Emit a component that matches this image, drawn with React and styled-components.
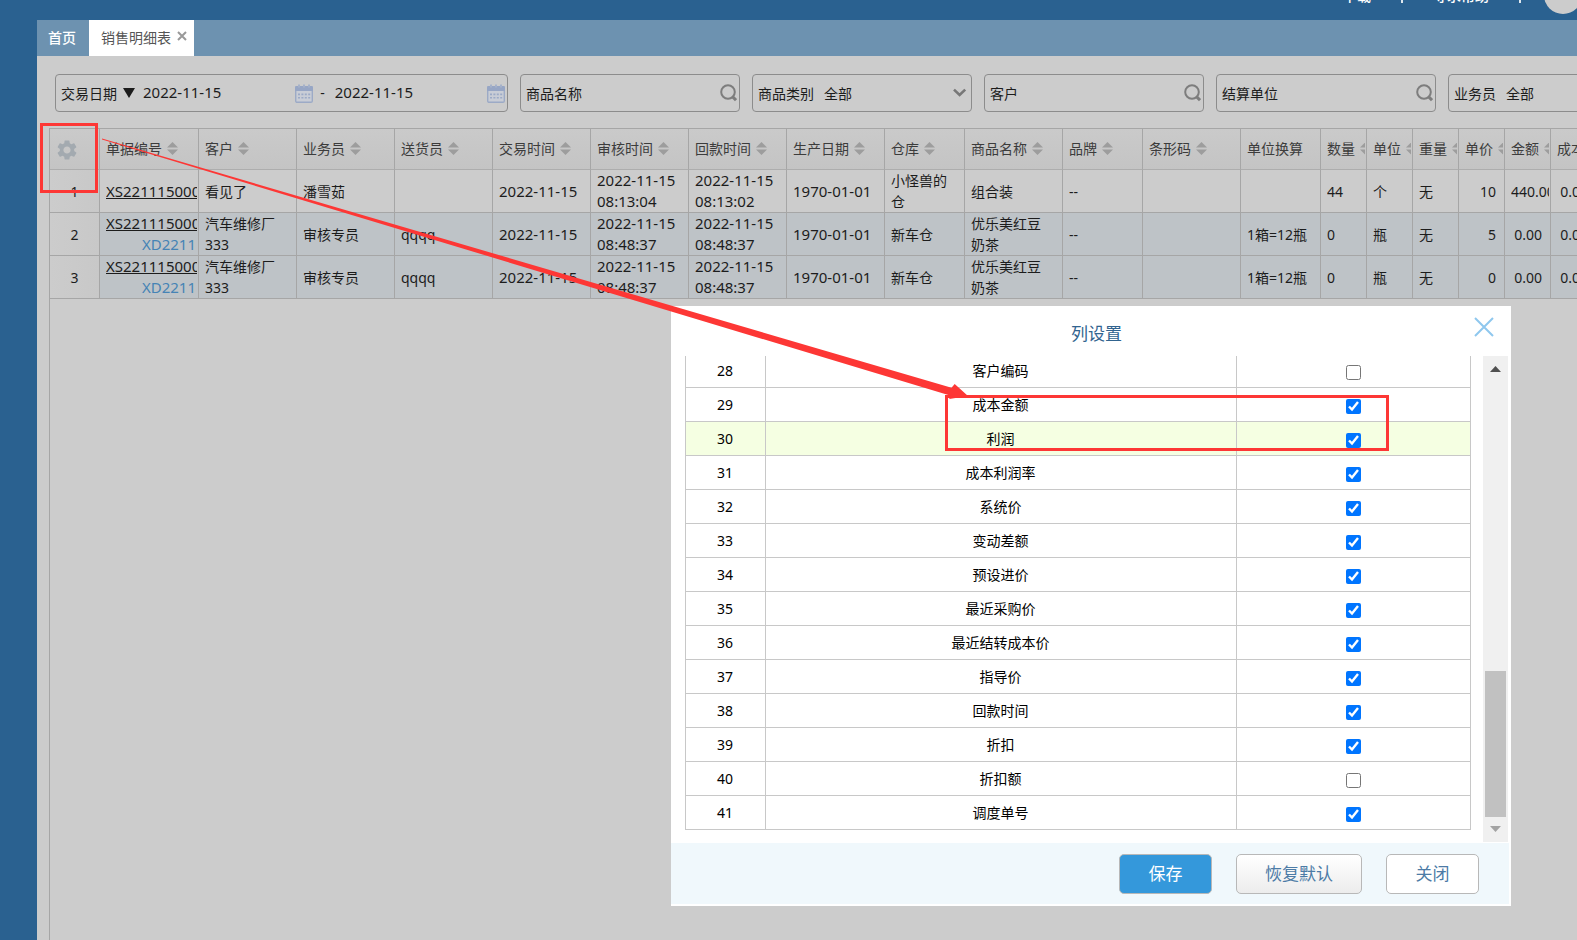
import React from 'react';
import styled, { createGlobalStyle } from 'styled-components';
import { MdSettings } from 'react-icons/md';

const GlobalStyle = createGlobalStyle`
  * {
    box-sizing: border-box;
  }
  body {
    margin: 0;
    overflow: hidden;
    background: #ccc;
    color: #1c1c1c;
    font-family: "Noto Sans", "Noto Sans CJK SC", sans-serif;
    font-size: 14px;
    line-height: 21px;
  }
  button, input, select {
    font: inherit;
    color: inherit;
  }
`;

const Page = styled.div`
  display: flex;
  flex-direction: column;
  height: 100vh;
  overflow: hidden;
`;

const TopBar = styled.header`
  display: flex;
  flex: none;
  align-items: flex-end;
  justify-content: flex-end;
  height: 20px;
  padding: 0 0 6px;
  overflow: hidden;
  background: #2a6190;
  color: #fff;
`;

const TopLinks = styled.nav`
  display: flex;
  align-items: center;
  gap: 30px;
  height: 38px;
  margin-right: -5px;
`;

const TopLink = styled.a`
  color: #fff;
  font-weight: 500;
  text-decoration: none;
`;

const Separator = styled.span`
  width: 2px;
  height: 16px;
  background: #dfe8ef;
`;

const Avatar = styled.span`
  width: 38px;
  height: 38px;
  margin-left: -7px;
  border-radius: 50%;
  background: #ccc;
`;

const Body = styled.div`
  display: flex;
  flex: 1;
  min-height: 0;
`;

const Sidebar = styled.aside`
  flex: none;
  width: 37px;
  background: #2a6190;
`;

const Main = styled.main`
  display: flex;
  flex: 1;
  flex-direction: column;
  min-width: 0;
`;

const TabBar = styled.nav`
  display: flex;
  flex: none;
  height: 36px;
  background: #6d92b0;
`;

const Tab = styled.div`
  display: flex;
  align-items: center;
  gap: 6px;
  padding: ${props => props.$active ? '0 7px 2px 12px' : '0 13px 2px 11px'};
  background: ${props => props.$active ? '#fff' : 'transparent'};
`;

const TabLink = styled.a`
  color: ${props => props.$active ? '#555' : '#fff'};
  font-weight: ${props => props.$active ? 400 : 500};
  text-decoration: none;
`;

const TabClose = styled.button`
  display: flex;
  padding: 0 0 2px;
  border: 0;
  background: none;
`;

const Filters = styled.form`
  display: flex;
  flex: none;
  gap: 12px;
  padding: 18px 0 16px 18px;
`;

const FilterBox = styled.div`
  display: flex;
  flex: none;
  align-items: center;
  width: ${props => props.$wide ? '453px' : '220px'};
  height: 38px;
  padding: 0 2px 0 5px;
  border: 1px solid #8c8c8c;
  border-radius: 4px;
`;

const FilterLabel = styled.label`
  flex: none;
`;

const FilterInput = styled.input`
  flex: 1;
  min-width: 0;
  padding: ${props => props.$date ? '0 8px 2px' : '0 8px'};
  border: 0;
  outline: 0;
  background: none;
  font-size: ${props => props.$date ? '15px' : '14px'};
`;

const FilterSelect = styled.select`
  flex: 1;
  min-width: 0;
  padding: 0 10px;
  border: 0;
  outline: 0;
  appearance: none;
  background: none;
`;

const DateKind = styled.button`
  display: flex;
  align-items: center;
  gap: 6px;
  padding: 0;
  border: 0;
  background: none;
`;

const Dash = styled.span`
  padding: 0 2px 2px 7px;
`;

const Grid = styled.section`
  flex: 1;
  margin-left: 12px;
  overflow: hidden;
  border-top: 1px solid #a6a6a6;
  border-left: 1px solid #a6a6a6;
`;

const DataTable = styled.table`
  width: 0;
  border-collapse: separate;
  border-spacing: 0;
  table-layout: fixed;
`;

const Th = styled.th`
  height: 41px;
  padding: 0;
  border-right: 1px solid #a6a6a6;
  border-bottom: 1px solid #adadad;
  background: linear-gradient(#cacaca, #c4c4c4);
  color: #3c3c3c;
  font-weight: 400;
  text-align: left;
`;

const HeadContent = styled.div`
  display: flex;
  align-items: center;
  gap: 5px;
  margin: 0 1px 0 6px;
  padding-bottom: 2px;
  overflow: hidden;
  white-space: nowrap;
`;

const GearButton = styled.button`
  display: flex;
  margin-left: 5px;
  padding: 2px 0 0;
  border: 0;
  background: none;
  color: #a3aab0;
`;

const Tr = styled.tr`
  background: ${props => props.$shaded ? '#bec3c7' : '#ccc'};
`;

const Td = styled.td`
  height: 43px;
  padding: 0;
  border-right: 1px solid #a6a6a6;
  border-bottom: 1px solid #a6a6a6;
`;

const RowNumber = styled.th`
  padding: 0;
  border-right: 1px solid #a6a6a6;
  border-bottom: 1px solid #a6a6a6;
  background: linear-gradient(90deg, #ccc, #c8c8c8);
  font-weight: 400;
`;

const CellContent = styled.div`
  margin: 0 1px 0 6px;
  padding-right: 7px;
  overflow: hidden;
  font-size: ${props => props.$numeric ? '15px' : '14px'};
  text-align: ${props => props.$right ? 'right' : 'left'};
  white-space: ${props => props.$right ? 'nowrap' : 'normal'};
`;

const OrderCell = styled.div`
  margin: 0 1px 0 6px;
  overflow: hidden;
  font-size: 15px;
  white-space: nowrap;
`;

const OrderLink = styled.a`
  display: block;
  color: inherit;
`;

const SubOrderLink = styled.a`
  display: block;
  padding-right: 1px;
  color: #4683b5;
  text-align: right;
  text-decoration: none;
`;

const Dialog = styled.section`
  position: absolute;
  top: 306px;
  right: 66px;
  display: flex;
  flex-direction: column;
  width: 840px;
  height: 600px;
  padding: 0 2px 2px 0;
  background: #fff;
  color: #000;
`;

const DialogHeader = styled.div`
  display: flex;
  flex: none;
  align-items: center;
  height: 50px;
  padding: 0 15px 0 48px;
`;

const DialogTitle = styled.h2`
  flex: 1;
  margin: 4px 0 0;
  color: #31648f;
  font-size: 17px;
  font-weight: 400;
  text-align: center;
`;

const DialogClose = styled.button`
  display: flex;
  padding: 0 0 8px;
  border: 0;
  background: none;
`;

const DialogBody = styled.div`
  display: flex;
  flex: 1;
  gap: 12px;
  min-height: 0;
  padding: 0 1px 1px 14px;
`;

const ColumnList = styled.div`
  display: flex;
  flex: 1;
  flex-direction: column;
  justify-content: flex-end;
  padding-bottom: 12px;
  overflow: hidden;
`;

const ColumnTable = styled.table`
  width: 100%;
  border-collapse: collapse;
  table-layout: fixed;
`;

const ColumnRow = styled.tr`
  background: ${props => props.$highlight ? '#f5ffe2' : '#fff'};
`;

const ColumnCell = styled.td`
  width: ${props => props.$width || 'auto'};
  height: 34px;
  padding: 0 1px 0 0;
  border: 1px solid #c8c8c8;
  text-align: center;
`;

const Checkbox = styled.input`
  display: block;
  width: 15px;
  height: 15px;
  margin: 4px auto 0;
`;

const ScrollTrack = styled.div`
  display: flex;
  flex: none;
  flex-direction: column;
  align-items: center;
  justify-content: space-between;
  width: 25px;
  padding: 10px 2px;
  background: #f0f0f0;
`;

const ScrollThumb = styled.div`
  width: 21px;
  height: 146px;
  margin: auto 0 9px;
  background: #c1c1c1;
`;

const DialogFooter = styled.div`
  display: flex;
  flex: none;
  align-items: center;
  justify-content: flex-end;
  gap: 24px;
  height: 61px;
  padding-right: 30px;
  background: #f0f8fc;
`;

const DialogButton = styled.button`
  min-width: 93px;
  height: 40px;
  padding: 0 28px;
  border: 1px solid #b8b8b8;
  border-radius: 5px;
  background: ${props => props.$background || '#fff'};
  color: ${props => props.$color || '#4c7ba6'};
  font-size: 17px;
`;

const Markup = styled.svg`
  position: absolute;
  top: 0;
  left: 0;
  pointer-events: none;
`;

const SortIcon = () => (
  <svg width="11" height="13" viewBox="0 0 11 13" fill="#9d9d9d" style={{ flex: 'none' }}>
    <path d="M5.5 0L11 5.6H0z" />
    <path d="M5.5 13L11 7.4H0z" />
  </svg>
);

const SearchIcon = () => (
  <svg width="17" height="18" viewBox="0 0 17 18" fill="none" stroke="#7d7d7d">
    <circle cx="8" cy="8" r="6.8" strokeWidth="2" />
    <path d="M12.2 12.4L16 16.2" strokeWidth="3" />
  </svg>
);

const CalendarIcon = () => (
  <svg width="18" height="19" viewBox="0 0 18 19" style={{ flex: 'none' }}>
    <rect x="0.7" y="2.7" width="16.6" height="15.6" rx="1.4" fill="#c9cdd6" stroke="#9caac6" strokeWidth="1.4" />
    <path d="M0 3.4Q0 2 1.4 2H16.6Q18 2 18 3.4V7H0z" fill="#97a6c5" />
    <path d="M3 0.4h2v3H3zM8 0.4h2v3H8zM13 0.4h2v3h-2z" fill="#a5b1c9" />
    <path d="M3 9.6h2v1.6H3zM6.4 9.6h2v1.6h-2zM9.8 9.6h2v1.6h-2zM13.2 9.6h2v1.6h-2zM3 13h2v1.6H3zM6.4 13h2v1.6h-2zM9.8 13h2v1.6h-2zM13.2 13h2v1.6h-2z" fill="#9caac6" />
  </svg>
);

const ChevronIcon = () => (
  <svg width="18" height="10" viewBox="0 0 18 10" fill="none" stroke="#777" strokeWidth="2.6">
    <path d="M3 1.6L8.6 7L14.2 1.6" />
  </svg>
);

const columns = [
  { title: '单据编号', width: 99 },
  { title: '客户', width: 98 },
  { title: '业务员', width: 98 },
  { title: '送货员', width: 98 },
  { title: '交易时间', width: 98, numeric: true },
  { title: '审核时间', width: 98, numeric: true },
  { title: '回款时间', width: 98, numeric: true },
  { title: '生产日期', width: 98, numeric: true },
  { title: '仓库', width: 80 },
  { title: '商品名称', width: 98 },
  { title: '品牌', width: 80 },
  { title: '条形码', width: 98 },
  { title: '单位换算', width: 80, unsorted: true },
  { title: '数量', width: 46 },
  { title: '单位', width: 46 },
  { title: '重量', width: 46 },
  { title: '单价', width: 46, right: true },
  { title: '金额', width: 46, right: true },
  { title: '成本金额', width: 46, right: true },
];

const rows = [
  {
    order: 'XS22111500001',
    cells: ['看见了', '潘雪茹', '', '2022-11-15', '2022-11-15 08:13:04', '2022-11-15 08:13:02', '1970-01-01',
      '小怪兽的仓', '组合装', '--', '', '', '44', '个', '无', '10', '440.00', '0.00'],
  },
  {
    order: 'XS22111500002',
    subOrder: 'XD2211',
    shaded: true,
    cells: ['汽车维修厂333', '审核专员', 'qqqq', '2022-11-15', '2022-11-15 08:48:37', '2022-11-15 08:48:37', '1970-01-01',
      '新车仓', '优乐美红豆奶茶', '--', '', '1箱=12瓶', '0', '瓶', '无', '5', '0.00', '0.00'],
  },
  {
    order: 'XS22111500003',
    subOrder: 'XD2211',
    shaded: true,
    cells: ['汽车维修厂333', '审核专员', 'qqqq', '2022-11-15', '2022-11-15 08:48:37', '2022-11-15 08:48:37', '1970-01-01',
      '新车仓', '优乐美红豆奶茶', '--', '', '1箱=12瓶', '0', '瓶', '无', '0', '0.00', '0.00'],
  },
];

const columnSettings = [
  { id: 28, name: '客户编码', checked: false },
  { id: 29, name: '成本金额', checked: true },
  { id: 30, name: '利润', checked: true, highlight: true },
  { id: 31, name: '成本利润率', checked: true },
  { id: 32, name: '系统价', checked: true },
  { id: 33, name: '变动差额', checked: true },
  { id: 34, name: '预设进价', checked: true },
  { id: 35, name: '最近采购价', checked: true },
  { id: 36, name: '最近结转成本价', checked: true },
  { id: 37, name: '指导价', checked: true },
  { id: 38, name: '回款时间', checked: true },
  { id: 39, name: '折扣', checked: true },
  { id: 40, name: '折扣额', checked: false },
  { id: 41, name: '调度单号', checked: true },
];

const SearchFilter = ({ id, label }) => (
  <FilterBox>
    <FilterLabel htmlFor={id}>{label}</FilterLabel>
    <FilterInput id={id} type="text" />
    <SearchIcon />
  </FilterBox>
);

const SelectFilter = ({ id, label }) => (
  <FilterBox>
    <FilterLabel htmlFor={id}>{label}</FilterLabel>
    <FilterSelect id={id}>
      <option>全部</option>
    </FilterSelect>
    <ChevronIcon />
  </FilterBox>
);

function SalesTable() {
  return (
    <Grid>
      <DataTable>
        <colgroup>
          <col style={{ width: 50 }} />
          {columns.map(col => <col key={col.title} style={{ width: col.width }} />)}
        </colgroup>
        <thead>
          <tr>
            <Th>
              <GearButton type="button" aria-label="列设置">
                <MdSettings size={24} />
              </GearButton>
            </Th>
            {columns.map(col => (
              <Th key={col.title}>
                <HeadContent>
                  {col.title}
                  {!col.unsorted && <SortIcon />}
                </HeadContent>
              </Th>
            ))}
          </tr>
        </thead>
        <tbody>
          {rows.map((row, index) => (
            <Tr key={row.order} $shaded={row.shaded}>
              <RowNumber scope="row">{index + 1}</RowNumber>
              <Td>
                <OrderCell>
                  <OrderLink href="#order">{row.order}</OrderLink>
                  {row.subOrder && <SubOrderLink href="#suborder">{row.subOrder}</SubOrderLink>}
                </OrderCell>
              </Td>
              {row.cells.map((cell, i) => {
                const col = columns[i + 1];
                return (
                  <Td key={col.title}>
                    <CellContent $numeric={col.numeric} $right={col.right}>
                      {cell}
                    </CellContent>
                  </Td>
                );
              })}
            </Tr>
          ))}
        </tbody>
      </DataTable>
    </Grid>
  );
}

function ColumnDialog() {
  return (
    <Dialog role="dialog" aria-labelledby="dialog-title">
      <DialogHeader>
        <DialogTitle id="dialog-title">列设置</DialogTitle>
        <DialogClose type="button" aria-label="关闭窗口">
          <svg width="20" height="20" viewBox="0 0 20 20" stroke="#8fc7ee" strokeWidth="2">
            <path d="M1 1L19 19M19 1L1 19" />
          </svg>
        </DialogClose>
      </DialogHeader>
      <DialogBody>
        <ColumnList>
          <ColumnTable>
            <tbody>
              {columnSettings.map(item => (
                <ColumnRow key={item.id} $highlight={item.highlight}>
                  <ColumnCell $width="80px">{item.id}</ColumnCell>
                  <ColumnCell>
                    <label htmlFor={`column-${item.id}`}>{item.name}</label>
                  </ColumnCell>
                  <ColumnCell $width="234px">
                    <Checkbox id={`column-${item.id}`} type="checkbox" defaultChecked={item.checked} />
                  </ColumnCell>
                </ColumnRow>
              ))}
            </tbody>
          </ColumnTable>
        </ColumnList>
        <ScrollTrack>
          <svg width="11" height="6" viewBox="0 0 11 6" fill="#505050"><path d="M5.5 0L11 6H0z" /></svg>
          <ScrollThumb />
          <svg width="11" height="6" viewBox="0 0 11 6" fill="#a3a3a3"><path d="M5.5 6L11 0H0z" /></svg>
        </ScrollTrack>
      </DialogBody>
      <DialogFooter>
        <DialogButton type="button" $background="#3498db" $color="#fff">保存</DialogButton>
        <DialogButton type="button" $background="linear-gradient(#fff, #ececec)">恢复默认</DialogButton>
        <DialogButton type="button">关闭</DialogButton>
      </DialogFooter>
    </Dialog>
  );
}

function App() {
  return (
    <Page>
      <GlobalStyle />
      <TopBar>
        <TopLinks>
          <TopLink href="#download">下载</TopLink>
          <Separator />
          <TopLink href="#help">寻求帮助</TopLink>
          <Separator />
          <Avatar />
        </TopLinks>
      </TopBar>
      <Body>
        <Sidebar />
        <Main>
          <TabBar>
            <Tab>
              <TabLink href="#home">首页</TabLink>
            </Tab>
            <Tab $active>
              <TabLink href="#sales" $active>销售明细表</TabLink>
              <TabClose type="button" aria-label="关闭标签">
                <svg width="10" height="10" viewBox="0 0 10 10" stroke="#999" strokeWidth="2">
                  <path d="M1 1L9 9M9 1L1 9" />
                </svg>
              </TabClose>
            </Tab>
          </TabBar>
          <Filters>
            <FilterBox $wide>
              <DateKind type="button">
                交易日期
                <svg width="12" height="10" viewBox="0 0 12 10"><path d="M0 0H12L6 10z" fill="#1c1c1c" /></svg>
              </DateKind>
              <FilterInput $date type="text" aria-label="开始日期" defaultValue="2022-11-15" />
              <CalendarIcon />
              <Dash>-</Dash>
              <FilterInput $date type="text" aria-label="结束日期" defaultValue="2022-11-15" />
              <CalendarIcon />
            </FilterBox>
            <SearchFilter id="product" label="商品名称" />
            <SelectFilter id="category" label="商品类别" />
            <SearchFilter id="customer" label="客户" />
            <SearchFilter id="settlement" label="结算单位" />
            <SelectFilter id="salesman" label="业务员" />
          </Filters>
          <SalesTable />
        </Main>
      </Body>
      <ColumnDialog />
      <Markup width="1400" height="460" viewBox="0 0 1400 460">
        <g fill="none" stroke="#fd3735" strokeWidth="3">
          <rect x="41.5" y="124.5" width="55" height="67" />
          <rect x="946.5" y="396.5" width="441" height="53" />
        </g>
        <path d="M102 138.6L951.5 387.8L954.7 384L968 396L949.3 399L950 395.6L102 139.6z" fill="#fd3735" />
      </Markup>
    </Page>
  );
}

export default App;
